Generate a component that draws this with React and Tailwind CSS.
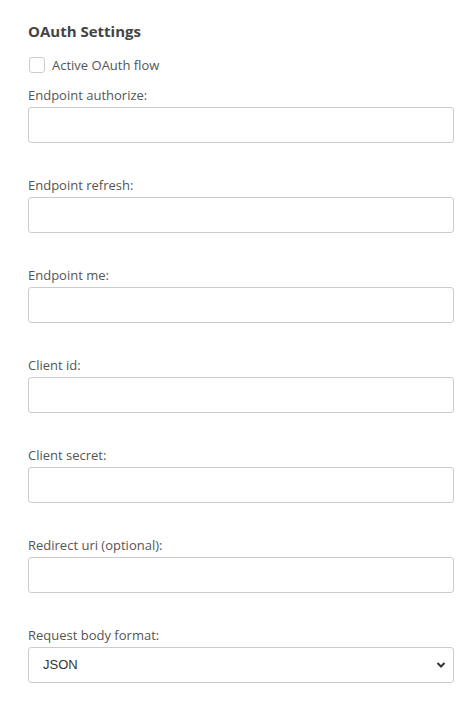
import React, { useState } from "react";

const fields = [
  "Endpoint authorize:",
  "Endpoint refresh:",
  "Endpoint me:",
  "Client id:",
  "Client secret:",
  "Redirect uri (optional):",
];

export default function App() {
  const [active, setActive] = useState(false);
  const [format, setFormat] = useState("JSON");

  return (
    <div className="min-h-[708px] bg-white pl-[28px] pt-[20px] text-[#555]" style={{ fontFamily: '"Open Sans", sans-serif' }}>
      <h2 className="text-[15px] font-bold leading-[22px] text-[#444]">OAuth Settings</h2>

      <label className="mt-[14px] flex items-center gap-[7px] pl-[1px] text-[13px] leading-[18px]">
        <input
          type="checkbox"
          checked={active}
          onChange={(e) => setActive(e.target.checked)}
          className="h-[16px] w-[16px] appearance-none rounded-[3px] border border-[#ccc] bg-white"
        />
        Active OAuth flow
      </label>

      <div className="mt-[12px] w-[426px]">
        {fields.map((f) => (
          <div key={f} className="mb-[33px]">
            <div className="mb-[3px] text-[13px] leading-[18px]">{f}</div>
            <input type="text" className="block h-[36px] w-full rounded-[3px] border border-[#ccc] bg-white px-3 text-[13px] outline-none" />
          </div>
        ))}

        <div>
          <div className="mb-[3px] text-[13px] leading-[18px]">Request body format:</div>
          <div className="relative">
            <select
              value={format}
              onChange={(e) => setFormat(e.target.value)}
              className="block h-[36px] w-full appearance-none rounded-[3px] border border-[#ccc] bg-white pl-[14px] text-[13px] text-[#333] outline-none"
              style={{ fontFamily: '"Liberation Sans", Arial, sans-serif' }}
            >
              <option>JSON</option>
              <option>Form data</option>
            </select>
            <svg className="pointer-events-none absolute right-[8px] top-[14px]" width="10" height="8" viewBox="0 0 10 8">
              <path d="M1.5 2 L5 5.5 L8.5 2" fill="none" stroke="#333" strokeWidth="2" />
            </svg>
          </div>
        </div>
      </div>
    </div>
  );
}
